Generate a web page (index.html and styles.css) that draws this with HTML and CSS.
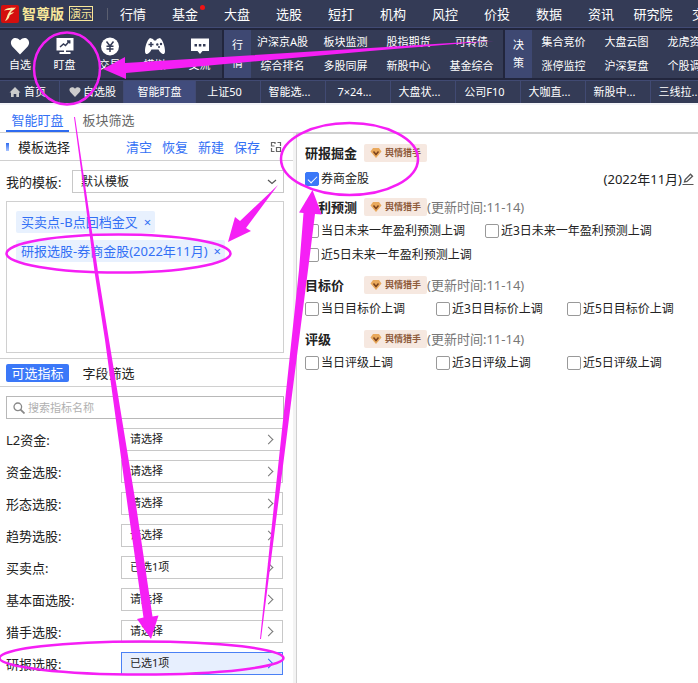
FILE: index.html
```html
<!DOCTYPE html>
<html lang="zh-CN">
  <head>
    <meta charset="UTF-8" />
    <meta name="viewport" content="width=device-width, initial-scale=1.0" />
    <title>智尊版</title>
    <link rel="stylesheet" href="styles.css">
  </head>
  <body>
    <header class="header">
      <div class="topbar">
        <div class="brand">
          <svg class="logo" viewBox="0 0 18 18" width="18" height="18">
            <rect width="18" height="18" rx="2" fill="#d40f0e" />
            <path d="M3 5.5C6 2 11 3 15 2.500C13 5 10 6 9.500 8L13 7C11.500 9.500 9 9 8.500 11C8 13.500 6.500 15 4 16C6 13 6 10 7.500 8C8.500 6.500 9 5.500 10 4.800C7 5.200 5 5 3 5.500Z" fill="#fbe9a8" />
          </svg>
          <span class="brand-name">智尊版</span>
          <span class="brand-demo">演示</span>
        </div>
        <nav class="main-nav">
          <a href="#">行情</a>
          <a href="#" class="has-dot">基金</a>
          <a href="#">大盘</a>
          <a href="#">选股</a>
          <a href="#">短打</a>
          <a href="#">机构</a>
          <a href="#">风控</a>
          <a href="#">价投</a>
          <a href="#">数据</a>
          <a href="#">资讯</a>
          <a href="#">研究院</a>
          <a href="#">交易</a>
        </nav>
      </div>

      <div class="toolbar">
        <div class="tools">
          <button type="button">
            <svg viewBox="0 0 20 20" width="20" height="20"><path d="M10 18.500L2.300 10.500C-2 5 4.500-1.500 10 4.200C15.500-1.500 22 5 17.700 10.500Z" fill="#fff" /></svg>
            自选
          </button>
          <button type="button">
            <svg viewBox="0 0 20 20" width="20" height="20"><path d="M1.500 2H18.500V14.500H11V16H15.500V18H4.500V16H9V14.500H1.500Z" fill="#fff" /><path d="M5 11L8.500 8L10.500 9.500L14.500 5M12 5H14.700V7.500" fill="none" stroke="#343b56" stroke-width="1.500" /></svg>
            盯盘
          </button>
          <button type="button">
            <svg viewBox="0 0 20 20" width="20" height="20"><circle cx="10" cy="10.500" r="9" fill="#fff" /><path d="M6.500 5.500L10 10L13.500 5.500M10 10V16M6.500 10.300H13.500M6.500 13H13.500" fill="none" stroke="#343b56" stroke-width="1.500" /></svg>
            交易
          </button>
          <button type="button">
            <svg viewBox="0 0 20 20" width="20" height="20"><path d="M5 2L8 3L9 4.500H11L12 3L15 2C18 4 20 11 20 15C20 20 16 18.500 13.500 13.500H6.500C4 18.500 0 20 0 15C0 11 2 4 5 2Z" fill="#fff" /><path d="M3.500 8.500H8.500M6 6V11" stroke="#343b56" stroke-width="1.500" /><circle cx="12.300" cy="8.500" r="1.200" fill="#343b56" /><circle cx="16" cy="8" r="1.200" fill="#343b56" /><circle cx="14" cy="11" r="1" fill="#343b56" /></svg>
            模拟
          </button>
          <button type="button">
            <svg viewBox="0 0 20 20" width="20" height="20"><path d="M1 2.500H19V15H12.500L10 18L7.500 15H1Z" fill="#fff" /><path d="M4.500 8H7V10.500H4.500ZM8.800 8H11.300V10.500H8.800ZM13 8H15.500V10.500H13Z" fill="#343b56" /></svg>
            交流
          </button>
        </div>
        <div class="block">
          <div class="block-name"><span>行</span><span>情</span></div>
          <div class="block-links">
            <a href="#">沪深京A股</a>
            <a href="#">板块监测</a>
            <a href="#">股指期货</a>
            <a href="#">可转债</a>
            <a href="#">综合排名</a>
            <a href="#">多股同屏</a>
            <a href="#">新股中心</a>
            <a href="#">基金综合</a>
          </div>
        </div>
        <div class="block">
          <div class="block-name"><span>决</span><span>策</span></div>
          <div class="block-links block-links-3">
            <a href="#">集合竞价</a>
            <a href="#">大盘云图</a>
            <a href="#">龙虎资金</a>
            <a href="#">涨停监控</a>
            <a href="#">沪深复盘</a>
            <a href="#">个股调研</a>
          </div>
        </div>
      </div>

      <nav class="page-tabs">
        <a href="#" class="home">
          <svg viewBox="0 0 12 12" width="12" height="12"><path d="M6 1L11.500 6.500H10V11H7.300V8H4.700V11H2V6.500H.5Z" fill="#ccc" /></svg>
          首页
        </a>
        <a href="#" class="favorite">
          <svg viewBox="0 0 12 12" width="12" height="12"><path d="M6 11L1.300 6C-1.500 2.500 3-.5 6 2.700C9-.5 13.500 2.500 10.700 6Z" fill="#ccc" /></svg>
          自选股
        </a>
        <a href="#" class="current">智能盯盘</a>
        <a href="#">上证50</a>
        <a href="#">智能选...</a>
        <a href="#">7×24...</a>
        <a href="#">大盘状...</a>
        <a href="#">公司F10</a>
        <a href="#">大咖直...</a>
        <a href="#">新股中...</a>
        <a href="#">三线拉...</a>
      </nav>
    </header>

    <div class="view-tabs">
      <button type="button" class="active">智能盯盘</button>
      <button type="button">板块筛选</button>
    </div>

    <main class="main">
      <aside class="sidebar">
        <div class="template-head">
          <h2>模板选择</h2>
          <button type="button">清空</button>
          <button type="button">恢复</button>
          <button type="button">新建</button>
          <button type="button">保存</button>
          <button type="button" aria-label="布局">
            <svg viewBox="0 0 12 12" width="12" height="12" fill="none" stroke="#666"><path d="M4.500 5H1.500V1.500H5V3M6.500 6.500H10.500V10.500H6.500ZM7.500 1.500H10.500V5M1.500 7V10.500H4.500" stroke-width="1.200" /></svg>
          </button>
        </div>

        <div class="template-row">
          <label for="template">我的模板:</label>
          <div class="select">
            <select id="template">
              <option>默认模板</option>
            </select>
            <svg viewBox="0 0 10 6" width="10" height="6"><path d="M1 1L5 4.500L9 1" fill="none" stroke="#555" stroke-width="1.200" /></svg>
          </div>
        </div>

        <div class="tags">
          <span class="tag">买卖点-B点回档金叉<button type="button" aria-label="删除">×</button></span>
          <span class="tag">研报选股-券商金股(2022年11月)<button type="button" aria-label="删除">×</button></span>
        </div>

        <div class="filter-tabs">
          <button type="button" class="active">可选指标</button>
          <button type="button">字段筛选</button>
        </div>

        <div class="search">
          <svg viewBox="0 0 12 12" width="12" height="12" fill="none" stroke="#888"><circle cx="4.800" cy="4.800" r="3.800" stroke-width="1.300" /><path d="M7.600 7.600L11.500 11.500" stroke-width="1.800" /></svg>
          <input type="text" placeholder="搜索指标名称" aria-label="搜索指标名称" />
        </div>

        <div class="filters">
          <div class="filter">
            <label for="f1">L2资金:</label>
            <button type="button" id="f1">请选择</button>
          </div>
          <div class="filter">
            <label for="f2">资金选股:</label>
            <button type="button" id="f2">请选择</button>
          </div>
          <div class="filter">
            <label for="f3">形态选股:</label>
            <button type="button" id="f3">请选择</button>
          </div>
          <div class="filter">
            <label for="f4">趋势选股:</label>
            <button type="button" id="f4">请选择</button>
          </div>
          <div class="filter">
            <label for="f5">买卖点:</label>
            <button type="button" id="f5">已选1项</button>
          </div>
          <div class="filter">
            <label for="f6">基本面选股:</label>
            <button type="button" id="f6">请选择</button>
          </div>
          <div class="filter">
            <label for="f7">猎手选股:</label>
            <button type="button" id="f7">请选择</button>
          </div>
          <div class="filter">
            <label for="f8">研报选股:</label>
            <button type="button" id="f8" class="open">已选1项</button>
          </div>
        </div>
      </aside>

      <section class="options">
        <div class="group group-first">
          <div class="group-head">
            <h3>研报掘金</h3>
            <span class="badge"><svg viewBox="0 0 12 12" width="12" height="12"><path d="M3 1H9L11.500 4.500L6 11L.5 4.500Z" fill="#e9a95c" /><path d="M3.500 4.500L6 7.500L8.500 4.500" fill="none" stroke="#7a421d" stroke-width="1.500" /></svg>舆情猎手</span>
          </div>
          <div class="checks">
            <label><input type="checkbox" checked />券商金股</label>
            <span class="month">(2022年11月)</span>
            <button type="button" class="edit" aria-label="编辑">
              <svg viewBox="0 0 12 12" width="12" height="12" fill="none" stroke="#555"><path d="M2.500 9L3.200 6.500L8.500 1.200L10.500 3.200L5 8.500Z" stroke-width="1.300" /><path d="M.5 11.500H11.500" /></svg>
            </button>
          </div>
        </div>

        <div class="group">
          <div class="group-head">
            <h3>盈利预测</h3>
            <span class="badge"><svg viewBox="0 0 12 12" width="12" height="12"><path d="M3 1H9L11.500 4.500L6 11L.5 4.500Z" fill="#e9a95c" /><path d="M3.500 4.500L6 7.500L8.500 4.500" fill="none" stroke="#7a421d" stroke-width="1.500" /></svg>舆情猎手</span>
            <span class="updated">(更新时间:11-14)</span>
          </div>
          <div class="checks checks-wide">
            <label><input type="checkbox" />当日未来一年盈利预测上调</label>
            <label><input type="checkbox" />近3日未来一年盈利预测上调</label>
            <label><input type="checkbox" />近5日未来一年盈利预测上调</label>
          </div>
        </div>

        <div class="group">
          <div class="group-head">
            <h3>目标价</h3>
            <span class="badge"><svg viewBox="0 0 12 12" width="12" height="12"><path d="M3 1H9L11.500 4.500L6 11L.5 4.500Z" fill="#e9a95c" /><path d="M3.500 4.500L6 7.500L8.500 4.500" fill="none" stroke="#7a421d" stroke-width="1.500" /></svg>舆情猎手</span>
            <span class="updated">(更新时间:11-14)</span>
          </div>
          <div class="checks">
            <label><input type="checkbox" />当日目标价上调</label>
            <label><input type="checkbox" />近3日目标价上调</label>
            <label><input type="checkbox" />近5日目标价上调</label>
          </div>
        </div>

        <div class="group">
          <div class="group-head">
            <h3>评级</h3>
            <span class="badge"><svg viewBox="0 0 12 12" width="12" height="12"><path d="M3 1H9L11.500 4.500L6 11L.5 4.500Z" fill="#e9a95c" /><path d="M3.500 4.500L6 7.500L8.500 4.500" fill="none" stroke="#7a421d" stroke-width="1.500" /></svg>舆情猎手</span>
            <span class="updated">(更新时间:11-14)</span>
          </div>
          <div class="checks">
            <label><input type="checkbox" />当日评级上调</label>
            <label><input type="checkbox" />近3日评级上调</label>
            <label><input type="checkbox" />近5日评级上调</label>
          </div>
        </div>
      </section>
    </main>

    <!-- guide marks drawn over the page -->
    <svg class="marks" viewBox="0 0 698 683" width="698" height="683">
      <g fill="none" stroke="#f51ff5" stroke-width="2.500">
        <ellipse cx="67" cy="68.500" rx="33" ry="36" />
        <ellipse cx="349.500" cy="159" rx="68.500" ry="36" />
        <ellipse cx="118.500" cy="253.500" rx="112" ry="19" />
        <ellipse cx="141.500" cy="658" rx="142" ry="16.500" />
      </g>
      <g fill="#f51ff5">
        <path d="M103 69L125 57V63L370 48L455 42.800L494 41L455 44L370 51L126 73V79Z" />
        <path d="M74 117L75 117L98.500 275L109 340L136 505L152.500 616.500L158.500 615.500L151 639L137 619L143.500 617.500L127.500 505L105 340L95 275Z" />
        <path d="M260 639L274 505L291.500 340L299 270L303.500 213L299 212.500L312.500 190L321.700 214.500L315 214L308 270L299 340L278 505L261 639Z" />
        <path d="M278 185L246 228L251 231L228 242L235 217L240 221Z" />
      </g>
    </svg>
  </body>
</html>
```
FILE: styles.css
```css
* {
  box-sizing: border-box;
}

body {
  margin: 0;
  position: relative;
  background-color: #fff;
  color: #222;
  font-family: "Noto Sans", "Noto Sans CJK SC", sans-serif;
  font-size: 13px;
  line-height: 18px;
}

a {
  color: inherit;
  text-decoration: none;
}

button {
  padding: 0;
  border: none;
  background: none;
  color: inherit;
  font: inherit;
  cursor: pointer;
}

h2,
h3 {
  margin: 0;
  font-size: 13px;
}

svg {
  display: block;
  flex: none;
}

/* header */
.header {
  background-color: #22263d;
  color: #fff;
  overflow: hidden;
}

.topbar {
  display: flex;
  height: 28px;
  background-color: #343b56;
  border-bottom: 1px solid #414a73;
}

.brand {
  display: flex;
  flex: none;
  align-items: center;
  width: 107px;
  padding-left: 1px;
  color: #f8e79a;
}

.brand-name {
  margin: 0 5px 0 3px;
  font-size: 14px;
  font-weight: bold;
}

.brand-demo {
  border: 1px solid #f8e79a;
  font-size: 11px;
  line-height: 13px;
}

.main-nav {
  display: flex;
  align-items: center;
}

.main-nav::before {
  content: "";
  width: 1px;
  height: 12px;
  margin-right: -1px;
  background-color: #5b5f70;
}

.main-nav a {
  position: relative;
  flex: none;
  width: 52px;
  text-align: center;
}

.has-dot::after {
  content: "";
  position: absolute;
  top: 0;
  right: 6px;
  width: 5px;
  height: 5px;
  border-radius: 50%;
  background-color: #f01414;
}

.toolbar {
  display: flex;
  gap: 2px;
  height: 48px;
  margin: 2px 0;
  font-size: 11px;
}

.tools {
  display: flex;
  flex: none;
  width: 222px;
  background-color: #343b56;
}

.tools button {
  display: flex;
  flex-direction: column;
  align-items: center;
  flex: none;
  width: 45px;
  padding: 6px 0 0;
}

.tools button:first-child {
  width: 42px;
  padding-right: 2px;
}

.block {
  display: flex;
  flex: none;
  background-color: #343b56;
}

.block-name {
  display: flex;
  flex-direction: column;
  justify-content: center;
  width: 27px;
  background-color: #3e4872;
  text-align: center;
}

.block-links {
  display: grid;
  grid-template-columns: repeat(4, 63px);
  align-items: center;
  text-align: center;
}

.block-links-3 {
  grid-template-columns: repeat(3, 63px);
}

.page-tabs {
  display: flex;
  height: 23px;
  background-color: #343b56;
  border-top: 1px solid #414a73;
  font-size: 11px;
  line-height: 22px;
}

.page-tabs a {
  flex: none;
  width: 65px;
  padding-right: 7px;
  border-right: 1px solid #414a73;
  text-align: center;
}

.page-tabs .home,
.page-tabs .favorite {
  display: flex;
  align-items: center;
  gap: 3px;
  width: 60px;
  padding: 0 0 0 9px;
}

.page-tabs .favorite {
  width: 64px;
  gap: 2px;
}

.page-tabs .current {
  width: 72px;
  padding: 0;
  background-color: #414c7c;
}

/* view tabs */
.view-tabs {
  display: flex;
  gap: 8px;
  height: 29px;
  padding-left: 6px;
  border-top: 2px solid #f3f4f8;
  color: #666;
}

.view-tabs button {
  width: 63px;
  padding-top: 5px;
  border-bottom: 2px solid transparent;
}

.view-tabs .active {
  border-color: #2e6bf0;
  color: #3370f5;
}

.main {
  display: flex;
  border-top: 1px solid #d0d0d0;
}

/* sidebar */
.sidebar {
  flex: none;
  width: 297px;
  min-height: calc(100vh - 133px);
  padding-bottom: 8px;
  border-right: 1px solid #d0d0d0;
  box-shadow: inset -3px 0 #f3f3f3;
}

.template-head {
  display: flex;
  align-items: center;
  gap: 10px;
  height: 28px;
  margin-right: 3px;
  padding: 0 11px 0 6px;
  border-bottom: 1px solid #d0d0d0;
  color: #3370f5;
}

.template-head::before {
  content: "";
  width: 3px;
  height: 8px;
  margin-right: -1px;
  background: linear-gradient(#2e6bf0, #a9c4ff);
}

.template-head h2 {
  flex: 1;
  color: #222;
  font-weight: normal;
}

.template-row {
  display: flex;
  align-items: center;
  margin: 9px 12px 8px 6px;
}

.template-row label {
  width: 66px;
}

.select {
  position: relative;
  flex: 1;
}

.select select {
  display: block;
  width: 100%;
  height: 23px;
  padding: 0 8px;
  border: 1px solid #c8c8c8;
  border-radius: 0;
  background-color: #fff;
  color: #222;
  font: inherit;
  font-size: 12px;
  appearance: none;
}

.select svg {
  position: absolute;
  top: 9px;
  right: 7px;
  pointer-events: none;
}

.tags {
  display: flex;
  flex-direction: column;
  align-items: flex-start;
  gap: 7px;
  height: 152px;
  margin: 0 12px 5px 6px;
  padding: 9px;
  border: 1px solid #d0d0d0;
}

.tag {
  padding: 0 4px 0 5px;
  border-radius: 2px;
  background-color: #e8f1fe;
  color: #3370f5;
  line-height: 22px;
}

.tag button {
  margin-left: 6px;
}

.filter-tabs {
  display: flex;
  align-items: center;
  gap: 8px;
  height: 29px;
  margin-right: 3px;
  padding-left: 6px;
  border: solid #d0d0d0;
  border-width: 1px 0;
}

.filter-tabs button {
  width: 63px;
  height: 18px;
  border-radius: 2px;
}

.filter-tabs .active {
  background-color: #3b78f8;
  color: #fff;
}

.search {
  display: flex;
  align-items: center;
  gap: 3px;
  height: 23px;
  margin: 9px 12px 9px 6px;
  padding-left: 6px;
  border: 1px solid #b8b8b8;
}

.search input {
  flex: 1;
  min-width: 0;
  padding: 0;
  border: none;
  outline: none;
  font: inherit;
  font-size: 11px;
}

.search input::placeholder {
  color: #b0b0b0;
}

.filters {
  display: grid;
  gap: 9px;
  margin: 0 13px 0 6px;
}

.filter {
  display: flex;
  align-items: center;
}

.filter label {
  width: 115px;
}

.filter button {
  display: flex;
  flex: 1;
  align-items: center;
  justify-content: space-between;
  height: 23px;
  padding: 0 10px 1px 8px;
  border: 1px solid #c8c8c8;
  font-size: 11px;
}

.filter button::after {
  content: "";
  width: 6px;
  height: 6px;
  border: solid #777;
  border-width: 1px 1px 0 0;
  transform: rotate(45deg);
}

.filter .open {
  border-color: #4a80f5;
  background-color: #e7effe;
}

.filter .open::after {
  border-color: #3370f5;
}

/* options */
.options {
  flex: 1;
  min-width: 0;
  padding: 7px 4px 8px 8px;
  border-top: 1px solid #d0d0d0;
}

.group {
  margin-bottom: 6px;
}

.group-head {
  display: flex;
  align-items: center;
  height: 24px;
}

.group-head h3 {
  width: 59px;
}

.badge {
  display: flex;
  align-items: center;
  gap: 3px;
  width: 63px;
  padding-left: 6px;
  border-radius: 2px;
  background-color: #f6e8e0;
  color: #8f5c3c;
  font-size: 9px;
  font-weight: bold;
}

.updated {
  color: #777;
}

.checks {
  display: grid;
  grid-template-columns: repeat(3, 131px);
  font-size: 12px;
  line-height: 24px;
}

.checks-wide {
  grid-template-columns: repeat(2, 180px);
}

.checks label {
  display: flex;
  align-items: center;
  gap: 2px;
  white-space: nowrap;
}

.checks input {
  flex: none;
  width: 14px;
  height: 14px;
  margin: 0;
  border: 1px solid #999;
  border-radius: 2px;
  background-color: #fff;
  appearance: none;
}

.checks input:checked {
  border-color: #3b78f8;
  background-color: #3b78f8;
}

.checks input:checked::after {
  content: "";
  display: block;
  width: 8px;
  height: 4px;
  margin: 3px 2px;
  border: solid #fff;
  border-width: 0 0 1px 1px;
  transform: rotate(-45deg);
}

.group-first {
  margin-bottom: 2px;
}

.group-first .checks {
  display: flex;
  align-items: center;
  height: 28px;
}

.month {
  margin-left: auto;
  font-size: 13px;
}

/* marks */
.marks {
  position: absolute;
  top: 0;
  left: 0;
  pointer-events: none;
}
```
